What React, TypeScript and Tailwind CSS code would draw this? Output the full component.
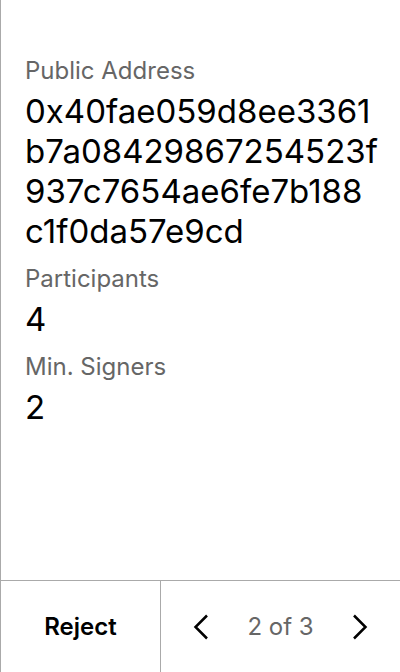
import React from 'react';

const Field = ({ label, lines }: { label: string; lines: string[] }) => (
  <div className="flex flex-col gap-[4px]">
    <div className="text-[24px] leading-[32px] text-[#666666]">{label}</div>
    <div className="flex flex-col">
      {lines.map((line) => (
        <span key={line} className="text-[33px] leading-[40px] text-black whitespace-nowrap">
          {line}
        </span>
      ))}
    </div>
  </div>
);

const App = () => {
  return (
    <div
      className="w-[400px] h-[672px] flex flex-col border-l border-[#aaaaaa] bg-white"
      style={{ fontFamily: 'Inter, "Noto Sans", sans-serif' }}
    >
      <div className="flex-1 flex flex-col gap-[12px] px-6 pt-[55px]">
        <Field
          label="Public Address"
          lines={['0x40fae059d8ee3361', 'b7a08429867254523f', '937c7654ae6fe7b188', 'c1f0da57e9cd']}
        />
        <Field label="Participants" lines={['4']} />
        <Field label="Min. Signers" lines={['2']} />
      </div>
      <div className="h-[92px] flex border-t border-[#aaaaaa]">
        <button className="w-[160px] flex items-center justify-center border-r border-[#aaaaaa] text-[24px] font-semibold text-black">
          Reject
        </button>
        <div className="flex-1 flex items-center justify-between px-[32px]">
          <svg width="16" height="26" viewBox="0 0 16 26" fill="none" stroke="black" strokeWidth="2.5">
            <path d="M14 1.5 L2.5 13 L14 24.5" />
          </svg>
          <span className="text-[24px] text-[#666666]">2 of 3</span>
          <svg width="16" height="26" viewBox="0 0 16 26" fill="none" stroke="black" strokeWidth="2.5">
            <path d="M2 1.5 L13.5 13 L2 24.5" />
          </svg>
        </div>
      </div>
    </div>
  );
};

export default App;
